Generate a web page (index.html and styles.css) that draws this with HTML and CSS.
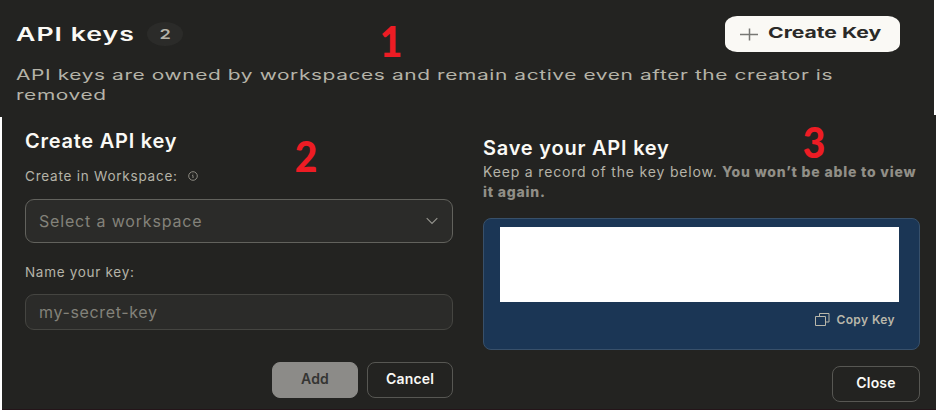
FILE: index.html
```html
<!DOCTYPE html>
<html lang="en">
<head>
<meta charset="utf-8">
<title>API keys</title>
<link rel="stylesheet" href="styles.css">
</head>
<body>
<div class="page">
  <header class="top">
    <div class="bar">
      <h1 class="title"><span class="wide">API keys</span></h1>
      <span class="count"><span class="wide-c">2</span></span>
      <button class="create">
        <svg width="18" height="13" viewBox="0 0 18 13"><path d="M0 6.5H18M9.5 0.5V12.5" fill="none" stroke="#777774" stroke-width="1.5"/></svg>
        <span class="create-label">Create Key</span>
      </button>
    </div>
    <p class="intro"><span class="intro-a">API keys are owned by workspaces and remain active even after the creator is</span><br><span class="intro-b">removed</span></p>
  </header>
  <main class="panels">
    <section class="form">
      <h2 class="form-title">Create API key</h2>
      <div class="label label-ws"><span>Create in Workspace:</span>
        <svg width="10" height="10" viewBox="0 0 10 10" fill="none" stroke="#96948b"><circle cx="5" cy="5" r="4.3" stroke-width=".9"/><path d="M4.2 4.5H5V7M4.9 2.7V3.4" stroke-width=".9"/></svg>
      </div>
      <div class="field select"><span>Select a workspace</span>
        <svg width="12" height="8" viewBox="0 0 12 8"><path d="M.7 1.2L6 6.5L11.3 1.2" fill="none" stroke="#96958f" stroke-width="1.1"/></svg>
      </div>
      <div class="label label-name"><span>Name your key:</span></div>
      <div class="field input"><span>my-secret-key</span></div>
      <div class="actions">
        <button class="btn add">Add</button>
        <button class="btn cancel">Cancel</button>
      </div>
    </section>
    <section class="save">
      <h2 class="save-title">Save your API key</h2>
      <p class="note"><span class="note-a">Keep a record of the key below.</span><strong class="note-b">You won’t be able to view</strong><br><strong class="note-c">it again.</strong></p>
      <div class="keybox">
        <div class="blank"></div>
        <div class="copy">
          <svg width="15" height="13" viewBox="0 0 15 13" fill="none" stroke="#b9b7aa"><path d="M.5 3.5H10.5V12.5H.5ZM4.5 3.5V.5H14V9H10.5"/></svg>
          <span>Copy Key</span>
        </div>
      </div>
      <button class="btn close">Close</button>
    </section>
  </main>
  <span class="mark one">1</span>
  <span class="mark two">2</span>
  <span class="mark three">3</span>
</div>
</body>
</html>
```
FILE: styles.css
```css
* { box-sizing: border-box; }
body { margin: 0; background: #fff; font-family: Inter, "Liberation Sans", sans-serif; }
.page { position: relative; width: 936px; height: 410px; overflow: hidden; }
h1, h2, p { margin: 0; }
span, strong { white-space: nowrap; }
button { font-family: inherit; padding: 0; }
.top { height: 117px; width: 934px; background: #232321; padding: 16px 34px 0 16px; }
.bar { display: flex; height: 36px; align-items: center; }
.title { width: 131px; font-size: 18.5px; line-height: 24px; font-weight: 600; color: #faf9f5; }
.wide { display: inline-block; transform: scaleX(1.44); transform-origin: left; letter-spacing: .7px; }
.count { width: 36px; height: 24px; border-radius: 50%; background: #2b2b29; color: #b5b3a8; font-size: 13px; font-weight: 600; display: grid; place-items: center; }
.wide-c { transform: scaleX(1.4); }
.create { margin-left: auto; width: 175px; height: 36px; border: 0; border-radius: 12px / 9px; background: #faf9f5; display: flex; align-items: center; padding: 0 0 0 15px; gap: 10px; color: #2a2a28; }
.create-label { font-size: 15px; line-height: 20px; font-weight: 700; transform: scaleX(1.41); transform-origin: left; margin-top: -2px; }
.intro { margin-top: 13px; font-size: 14px; line-height: 20px; color: #b5b3a8; }
.intro span { display: inline-block; transform-origin: left; letter-spacing: .4px; transform: scaleX(1.493); }
.panels { display: grid; grid-template-columns: 451px 1fr; margin: -2px 0 0 2px; height: 295px; background: #232321; border-bottom: 1px solid #241419; position: relative; }
.form { padding: 14px 0 0 23px; }
.form-title { font-size: 20px; line-height: 24px; font-weight: 600; color: #faf9f5; letter-spacing: .75px; }
.label { display: flex; align-items: center; color: #b5b3a8; font-size: 13.5px; line-height: 20px; }
.label-ws { margin-top: 13px; gap: 10px; letter-spacing: .77px; }
.field { width: 428px; border: 1px solid #62625d; background: #2b2b29; border-radius: 9px; padding: 0 14px 0 13px; display: flex; align-items: center; justify-content: space-between; font-size: 16px; color: #83827a; }
.select { height: 44px; margin-top: 13px; letter-spacing: .83px; }
.label-name { margin-top: 19px; letter-spacing: .7px; }
.input { height: 36px; margin-top: 12px; border-color: #454541; letter-spacing: .65px; }
.actions { display: flex; justify-content: flex-end; gap: 9px; width: 428px; margin-top: 32px; }
.btn { height: 36px; width: 86px; border-radius: 8px; border: 1px solid #575753; background: #232321; color: #faf9f5; font-size: 14px; font-weight: 600; letter-spacing: .2px; padding-bottom: 3px; }
.btn.add { background: #8c8b88; border-color: #8c8b88; color: #353533; }
.save { padding: 21px 16px 0 30px; }
.save-title { font-size: 20px; line-height: 24px; font-weight: 600; color: #faf9f5; letter-spacing: .78px; }
.note { font-size: 14px; line-height: 20px; color: #b5b3a8; margin-top: 2px; white-space: nowrap; }
.note span { display: inline-block; width: 239px; letter-spacing: .83px; }
.note strong { color: #918f87; font-weight: 800; letter-spacing: .8px; }
.keybox { height: 132px; width: 437px; margin-top: 16px; background: #1b3655; border: 1px solid #38506a; border-radius: 8px; padding: 8px 20px 0 16px; }
.blank { height: 75px; background: #fff; }
.copy { display: flex; justify-content: flex-end; align-items: center; gap: 6px; height: 20px; margin-top: 7px; padding-right: 4px; color: #b9b7aa; font-size: 12px; font-weight: 600; letter-spacing: .4px; }
.close { display: block; width: 88px; margin: 15px 0 0 349px; margin-top: 16px; }
.mark { position: absolute; font-family: Lato, sans-serif; font-weight: 900; font-size: 42px; line-height: 32px; color: #ed1c24; transform: scaleX(.93); }
.one { left: 379px; top: 25px; }
.two { left: 294px; top: 140px; }
.three { left: 802px; top: 126px; }
```
